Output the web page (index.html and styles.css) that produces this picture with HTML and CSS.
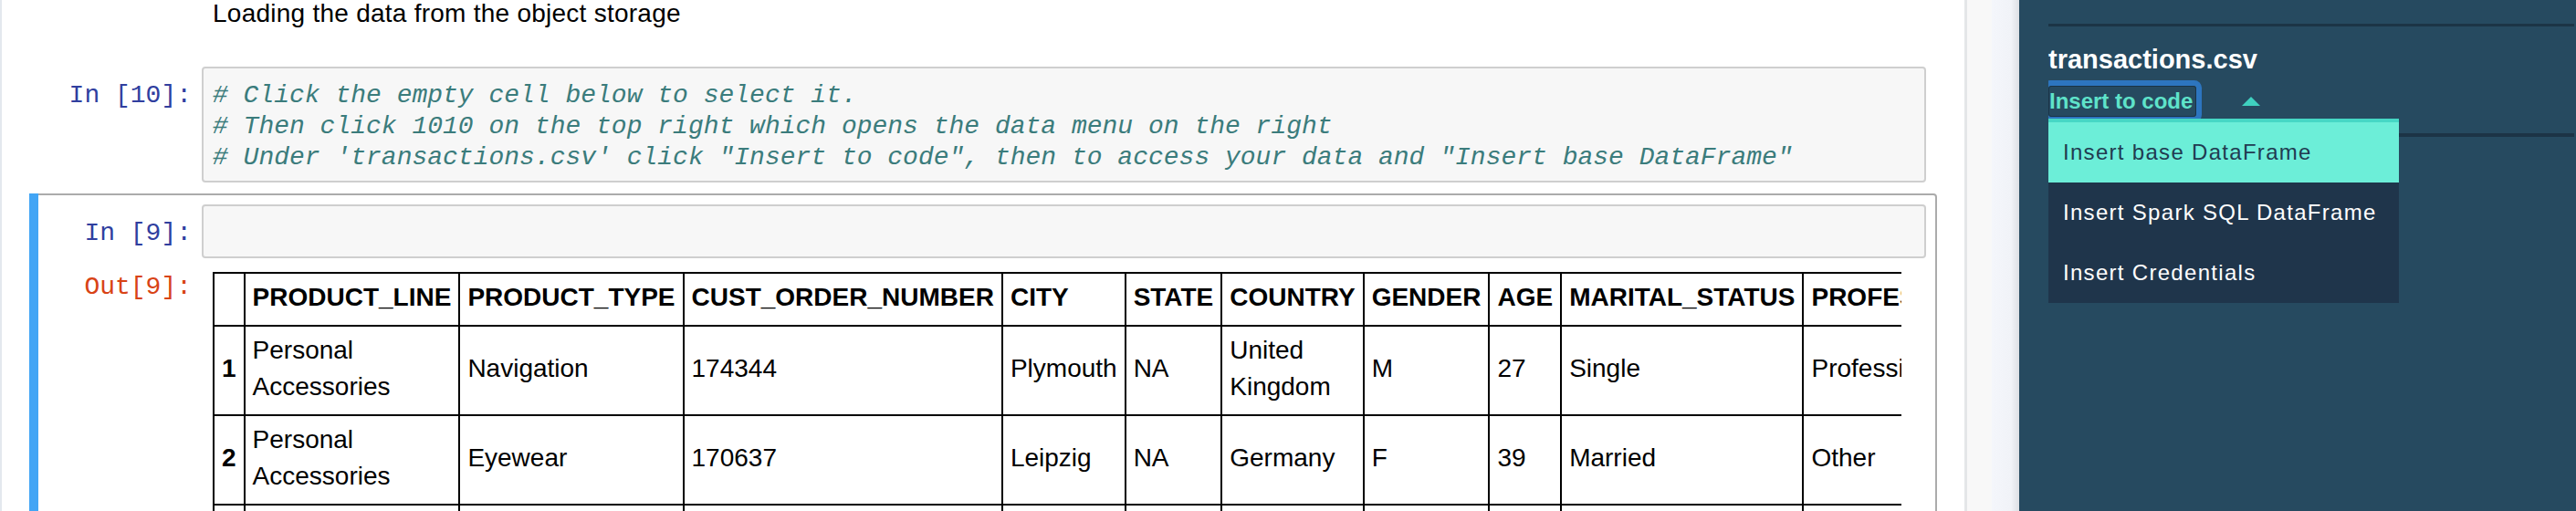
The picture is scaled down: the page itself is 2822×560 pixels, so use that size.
FILE: index.html
```html
<!DOCTYPE html>
<html>
<head>
<meta charset="utf-8">
<link rel="stylesheet" href="styles.css">
</head>
<body>
<div class="app">
  <div class="edge"></div>
  <div class="nb">
    <div class="md-cell">
      <div class="md-prompt"></div>
      <div class="md-text">Loading the data from the object storage</div>
    </div>
    <div class="cell">
      <div class="row">
        <div class="prompt in">In&nbsp;[10]:</div>
        <div class="input-area"><pre class="code"><span class="cm">#&nbsp;Click the empty cell below to select it.</span>
<span class="cm"># Then click 1010 on the top right which opens the data menu on the right</span>
<span class="cm"># Under 'transactions.csv' click "Insert to code", then to access your data and "Insert base DataFrame"</span></pre></div>
      </div>
    </div>
    <div class="cell selected">
      <div class="row">
        <div class="prompt in">In&nbsp;[9]:</div>
        <div class="input-area"><pre class="code"> </pre></div>
      </div>
      <div class="row">
        <div class="prompt out">Out[9]:</div>
        <div class="out-area">
          <div class="out-clip">
            <table class="df">
              <thead>
                <tr><th></th><th>PRODUCT_LINE</th><th>PRODUCT_TYPE</th><th>CUST_ORDER_NUMBER</th><th>CITY</th><th>STATE</th><th>COUNTRY</th><th>GENDER</th><th>AGE</th><th>MARITAL_STATUS</th><th>PROFESSION</th></tr>
              </thead>
              <tbody>
                <tr><th>1</th><td>Personal Accessories</td><td>Navigation</td><td>174344</td><td>Plymouth</td><td>NA</td><td>United Kingdom</td><td>M</td><td>27</td><td>Single</td><td>Professional</td></tr>
                <tr><th>2</th><td>Personal Accessories</td><td>Eyewear</td><td>170637</td><td>Leipzig</td><td>NA</td><td>Germany</td><td>F</td><td>39</td><td>Married</td><td>Other</td></tr>
                <tr><th>3</th><td>Camping Equipment</td><td>Tents</td><td>168932</td><td>Lyon</td><td>NA</td><td>France</td><td>M</td><td>45</td><td>Married</td><td>Retired</td></tr>
              </tbody>
            </table>
          </div>
        </div>
      </div>
    </div>
  </div>
  <div class="divider"></div>
  <div class="gutter"></div>
  <div class="shade"></div>
  <div class="panel">
    <div class="sep sep-top"></div>
    <div class="file-title">transactions.csv</div>
    <div class="btn-row">
      <span class="insert-btn">Insert to code</span>
      <span class="caret"></span>
    </div>
    <div class="sep sep-bottom"></div>
    <ul class="menu">
      <li class="menu-item active">Insert base DataFrame</li>
      <li class="menu-item">Insert Spark SQL DataFrame</li>
      <li class="menu-item">Insert Credentials</li>
    </ul>
  </div>
</div>
</body>
</html>
```
FILE: styles.css
```css
html, body {
  margin: 0;
  padding: 0;
  width: 2822px;
  height: 560px;
  overflow: hidden;
  background: #ffffff;
}

.app {
  display: flex;
  width: 2822px;
  height: 560px;
}

.edge {
  width: 2px;
  flex: none;
  background: #e3e8ee;
}

.nb {
  width: 2150px;
  flex: none;
  background: #ffffff;
  overflow: hidden;
  font-family: "Liberation Sans", Arial, sans-serif;
}

.divider {
  width: 3px;
  flex: none;
  background: #e4e6e8;
}

.gutter {
  width: 27px;
  flex: none;
  background: #f8f8f8;
}

.shade {
  width: 30px;
  flex: none;
  background: linear-gradient(to right, #f4f6fb 0%, #f1f3f8 70%, #dcdfe4 100%);
}

/* ---------- notebook cells ---------- */

.md-cell {
  display: flex;
  height: 61px;
  margin-left: 30px;
  width: 2090px;
  padding: 0 12px;
  box-sizing: border-box;
}

.md-prompt {
  width: 177px;
  flex: none;
}

.md-text {
  margin-top: -5px;
  padding-left: 12px;
  font-size: 28px;
  line-height: 40px;
  letter-spacing: 0.25px;
  color: #000;
}

.cell {
  position: relative;
  margin-left: 30px;
  width: 2090px;
  box-sizing: border-box;
  border: 2px solid transparent;
  border-radius: 4px;
  padding: 10px;
}

.cell.selected {
  border-color: #ababab;
}

.cell.selected::before {
  content: "";
  position: absolute;
  left: -2px;
  top: -2px;
  width: 10px;
  height: calc(100% + 4px);
  background: #42a5f5;
}

.row {
  display: flex;
  align-items: flex-start;
}

.prompt {
  width: 177px;
  flex: none;
  box-sizing: border-box;
  padding: 15px 11px 0 0;
  text-align: right;
  font-family: "Liberation Mono", "Courier New", monospace;
  font-size: 28px;
  line-height: 34px;
  white-space: nowrap;
}

.prompt.in {
  color: #303f9f;
}

.prompt.out {
  color: #d84315;
}

.input-area {
  flex: 1;
  min-width: 0;
  background: #f7f7f7;
  border: 2px solid #cfcfcf;
  border-radius: 4px;
}

.code {
  margin: 0;
  padding: 13px 10px 8px 10px;
  font-family: "Liberation Mono", "Courier New", monospace;
  font-size: 28px;
  line-height: 34px;
  color: #000;
  white-space: pre;
  overflow: hidden;
}

.cm {
  color: #3b7c7c;
  font-style: italic;
}

.out-area {
  flex: 1;
  min-width: 0;
  padding: 15px 27px 0 12px;
}

.out-clip {
  overflow: hidden;
}

.df {
  border-collapse: collapse;
  font-family: "Liberation Sans", Arial, sans-serif;
  font-size: 28px;
  line-height: 40px;
  color: #000;
}

.df th,
.df td {
  border: 2px solid #000;
  padding: 6px 8px 10px 8px;
  text-align: left;
  vertical-align: middle;
}

.df th {
  font-weight: bold;
}

/* ---------- data panel ---------- */

.panel {
  position: relative;
  flex: 1;
  background: #264a60;
  padding: 26px 2px 0 32px;
  font-family: "Liberation Sans", Arial, sans-serif;
}

.sep {
  background: #1c3446;
}

.sep-top {
  height: 3px;
}

.sep-bottom {
  height: 4px;
  margin-top: 12px;
}

.file-title {
  margin-top: 17px;
  font-size: 29px;
  line-height: 38px;
  font-weight: bold;
  color: #ffffff;
}

.btn-row {
  display: flex;
  align-items: flex-start;
  margin-top: 4px;
  height: 46px;
  padding-top: 6px;
  box-sizing: border-box;
  overflow: hidden;
}

.insert-btn {
  display: inline-block;
  box-sizing: border-box;
  height: 34px;
  padding: 0 3px 0 0;
  border: 1px solid #1a3347;
  border-radius: 3px;
  box-shadow: 0 0 0 6px #2d75bf;
  font-size: 24px;
  line-height: 32px;
  font-weight: bold;
  color: #5fe3ca;
  white-space: nowrap;
}

.caret {
  width: 0;
  height: 0;
  margin: 12px 0 0 50px;
  border-left: 10px solid transparent;
  border-right: 10px solid transparent;
  border-bottom: 10px solid #3fd0bf;
}

.menu {
  position: absolute;
  top: 130px;
  left: 32px;
  width: 384px;
  margin: 0;
  padding: 0;
  list-style: none;
  border-top: 4px solid #46d7c5;
  background: #1f354b;
}

.menu-item {
  height: 66px;
  line-height: 66px;
  padding-left: 16px;
  font-size: 24px;
  letter-spacing: 1.3px;
  color: #ffffff;
  white-space: nowrap;
}

.menu-item.active {
  background: #6ceed8;
  color: #213b51;
}
```
